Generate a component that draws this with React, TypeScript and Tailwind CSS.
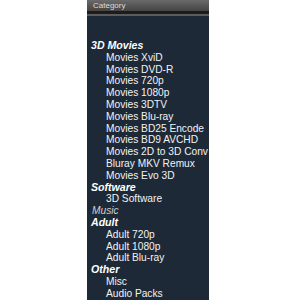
import React from "react";

type Row = { t: string; k: "g" | "i" | "m" };

const rows: Row[] = [
  { t: "3D Movies", k: "g" },
  { t: "Movies XviD", k: "i" },
  { t: "Movies DVD-R", k: "i" },
  { t: "Movies 720p", k: "i" },
  { t: "Movies 1080p", k: "i" },
  { t: "Movies 3DTV", k: "i" },
  { t: "Movies Blu-ray", k: "i" },
  { t: "Movies BD25 Encode", k: "i" },
  { t: "Movies BD9 AVCHD", k: "i" },
  { t: "Movies 2D to 3D Conv", k: "i" },
  { t: "Bluray MKV Remux", k: "i" },
  { t: "Movies Evo 3D", k: "i" },
  { t: "Software", k: "g" },
  { t: "3D Software", k: "i" },
  { t: "Music", k: "m" },
  { t: "Adult", k: "g" },
  { t: "Adult 720p", k: "i" },
  { t: "Adult 1080p", k: "i" },
  { t: "Adult Blu-ray", k: "i" },
  { t: "Other", k: "g" },
  { t: "Misc", k: "i" },
  { t: "Audio Packs", k: "i" },
];

export default function App() {
  return (
    <div className="w-[300px] h-[300px] bg-white overflow-hidden">
      <div className="ml-[87px] w-[122px] h-[300px] flex flex-col">
        <div
          className="h-[11px] shrink-0 bg-gradient-to-b from-[#6a6a6a] to-[#454545] text-[#dcdcdc] text-[8px] leading-[11px] pl-[6px]"
          style={{ fontFamily: '"Liberation Sans", Arial, sans-serif' }}
        >
          Category
        </div>
        <div className="h-[3px] shrink-0 bg-[#1c1c1c]" />
        <div className="h-[2px] shrink-0 bg-[#5c5c5c]" />
        <div
          className="flex-1 bg-[#1e2937] pt-[24px] overflow-hidden whitespace-nowrap"
          style={{ fontFamily: '"Liberation Sans", Arial, sans-serif' }}
        >
          {rows.map((r, i) =>
            r.k === "g" ? (
              <div
                key={i}
                className="h-[11.8px] leading-[11.8px] pl-[4px] text-[10.6px] font-bold italic text-white"
              >
                {r.t}
              </div>
            ) : r.k === "m" ? (
              <div
                key={i}
                className="h-[11.8px] leading-[11.8px] pl-[5px] text-[10.2px] italic text-[#d0d0d0]"
              >
                {r.t}
              </div>
            ) : (
              <div
                key={i}
                className="h-[11.8px] leading-[11.8px] pl-[19px] text-[10.2px] text-[#f2f2f2]"
              >
                {r.t}
              </div>
            )
          )}
        </div>
      </div>
    </div>
  );
}
